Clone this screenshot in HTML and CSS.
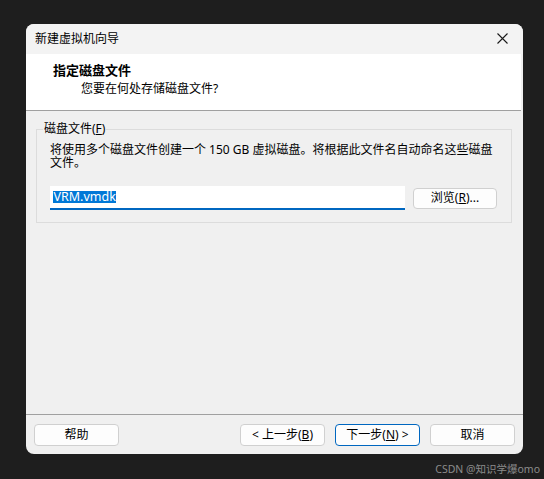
FILE: index.html
```html
<!DOCTYPE html>
<html lang="zh-CN">
<head>
<meta charset="utf-8">
<title>新建虚拟机向导</title>
<link rel="stylesheet" href="styles.css">
</head>
<body>
<div class="screen">
  <div class="dialog">
    <div class="titlebar">
      <span class="title">新建虚拟机向导</span>
      <span class="close">
        <svg width="11" height="11" viewBox="0 0 11 11"><path d="M0.5 0.5 L10.5 10.5 M10.5 0.5 L0.5 10.5" stroke="#1a1a1a" stroke-width="1.1" fill="none"/></svg>
      </span>
    </div>
    <div class="header">
      <div class="h-title">指定磁盘文件</div>
      <div class="h-sub">您要在何处存储磁盘文件?</div>
    </div>
    <div class="content">
      <fieldset class="group">
        <legend class="legend">磁盘文件(<u>F</u>)</legend>
        <p class="desc">将使用多个磁盘文件创建一个 150 GB 虚拟磁盘。将根据此文件名自动命名这些磁盘文件。</p>
        <div class="file-row">
          <div class="input"><span class="sel">VRM.vmdk</span></div>
          <button class="btn browse">浏览(<u>R</u>)...</button>
        </div>
      </fieldset>
    </div>
    <div class="footer">
      <button class="btn">帮助</button>
      <div class="nav">
        <button class="btn">&lt; 上一步(<u>B</u>)</button>
        <button class="btn primary">下一步(<u>N</u>) &gt;</button>
        <button class="btn">取消</button>
      </div>
    </div>
  </div>
  <div class="watermark">CSDN @知识学爆omo</div>
</div>
</body>
</html>
```
FILE: styles.css
```css
* { box-sizing: border-box; }
html, body { margin: 0; padding: 0; }
body {
  background: #1e1e1e;
  font-family: "Noto Sans", "Noto Sans CJK SC", sans-serif;
  font-size: 12px;
  color: #000;
}
.screen {
  width: 544px;
  height: 479px;
  display: flex;
  flex-direction: column;
  padding: 24px 0 0 26px;
}
.dialog {
  width: 497px;
  height: 430px;
  background: #f0f0f0;
  border-radius: 8px;
  overflow: hidden;
  display: flex;
  flex-direction: column;
}
.titlebar {
  height: 30px;
  flex: none;
  background: #f3f3f3;
  display: flex;
  align-items: center;
  justify-content: space-between;
  padding: 0 9px 0 9px;
}
.title { font-size: 12px; line-height: 16px; }
.close { display: flex; width: 11px; height: 11px; margin-right: 6px; margin-top: -1px; }
.header {
  height: 57px;
  flex: none;
  background: #fff;
  border-bottom: 1px solid #a0a0a0;
  margin-right: 2px;
  padding: 8px 0 0 27px;
}
.h-title { font-weight: bold; font-size: 13px; line-height: 16px; }
.h-sub { line-height: 16px; margin-top: 3px; padding-left: 28px; }
.content {
  flex: 1;
  padding: 10px 11px 0 10px;
}
.group {
  margin: 0;
  border: 1px solid #dcdcdc;
  padding: 0 14px 12px 13px;
  min-width: 0;
}
.legend {
  padding: 0 1px;
  margin-left: -7px;
  line-height: 16px;
}
.desc {
  margin: 6px 0 0 0;
  line-height: 13px;
  width: 450px;
}
.file-row {
  display: flex;
  align-items: center;
  gap: 8px;
  margin-top: 17px;
}
.input {
  width: 355px;
  height: 24px;
  background: #fff;
  border-bottom: 2px solid #0067c0;
  padding: 0 0 0 3px;
  display: flex;
  align-items: center;
}
.sel {
  display: inline-block;
  background: #0078d7;
  color: #fff;
  line-height: 12px;
  height: 12px;
  font-size: 12.5px;
  padding: 0 0.5px;
}
.btn {
  font: inherit;
  font-size: 12px;
  width: 85px;
  height: 22px;
  padding: 0;
  background: #fdfdfd;
  border: 1px solid #d0d0d0;
  border-radius: 4px;
  color: #000;
  line-height: 18px;
}
.browse { width: 84px; height: 21px; }
.primary { border-color: #0067c0; }
.footer {
  height: 40px;
  flex: none;
  border-top: 1px solid #a0a0a0;
  display: flex;
  align-items: flex-start;
  justify-content: space-between;
  padding: 9px 8px 0 8px;
}
.nav { display: flex; gap: 10px; }
.watermark {
  align-self: flex-end;
  margin-top: 8px;
  margin-right: 4px;
  color: #8c8c8c;
  font-size: 10.5px;
  line-height: 14px;
}
```
